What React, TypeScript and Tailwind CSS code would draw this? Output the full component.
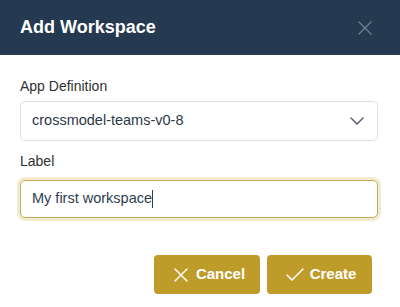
import { Check, ChevronDown, X } from 'lucide-react';

export default function App() {
  return (
    <div className="w-[400px] h-[307px] bg-white overflow-hidden font-['Liberation_Sans',Arial,sans-serif]">
      <div className="h-[55px] bg-[#253a50] flex items-center justify-between pl-5 pr-[23px]">
        <h1 className="text-white text-[18px] font-bold">Add Workspace</h1>
        <X className="w-6 h-6 text-[#6f7e8f]" strokeWidth={1.4} />
      </div>

      <div className="px-5 pt-[21px]">
        <label className="block text-[14px] text-[#2f2f2f] leading-[20px]">App Definition</label>
        <div className="mt-[5px] h-[40px] w-[358px] border border-[#dcdfe4] rounded-[5px] flex items-center justify-between pl-[11px] pr-[8px]">
          <span className="text-[14.5px] text-[#2d3748]">crossmodel-teams-v0-8</span>
          <ChevronDown className="w-6 h-6 text-[#4a5568]" strokeWidth={1.4} />
        </div>

        <label className="block mt-[10px] text-[14px] text-[#2f2f2f] leading-[20px]">Label</label>
        <div className="mt-[9px] h-[38px] w-[358px] border border-[#c9aa4e] rounded-[5px] ring-[3px] ring-[#f3ead2] flex items-center pl-[11px]">
          <span className="text-[14.5px] text-[#2d3e50]">My first workspace</span>
          <span className="w-px h-[18px] bg-[#2d3e50]" />
        </div>

        <div className="flex justify-end gap-[7px] mt-[37px] pr-[8px]">
          <button className="h-[39px] w-[106px] rounded-[4px] bg-[#bf9b2a] text-white text-[15px] font-bold flex items-center justify-center gap-[3px]">
            <X className="w-6 h-6" strokeWidth={1.5} />
            Cancel
          </button>
          <button className="h-[39px] w-[105px] rounded-[4px] bg-[#bf9b2a] text-white text-[15px] font-bold flex items-center justify-center gap-[3px]">
            <Check className="w-6 h-6" strokeWidth={1.5} />
            Create
          </button>
        </div>
      </div>
    </div>
  );
}
